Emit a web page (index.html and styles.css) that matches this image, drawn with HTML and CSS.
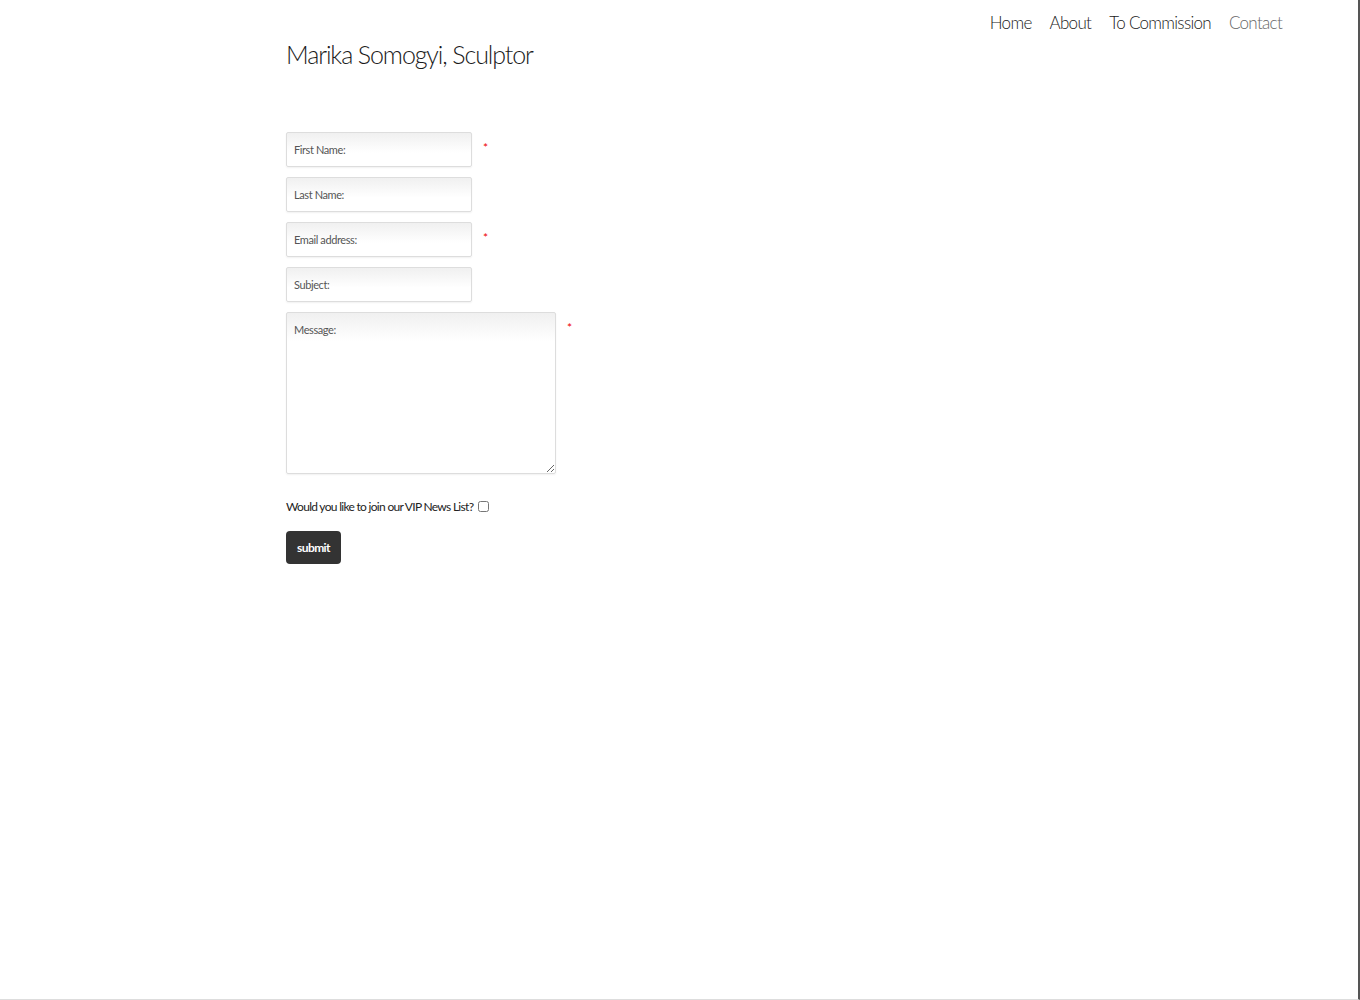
FILE: index.html
```html
<!DOCTYPE html>
<html>
  <head>
    <title>Contact - Marika Somogyi, Sculptor</title>
    <meta charset="UTF-8" />
    <link rel="stylesheet" href="styles.css">
  </head>
  <body>
    <div class="page">
      <div class="header">
        <ul class="nav">
          <li><a href="#">Home</a></li>
          <li><a href="#">About</a></li>
          <li><a href="#">To Commission</a></li>
          <li><a href="#" class="current">Contact</a></li>
        </ul>
        <h1 class="site-title">Marika Somogyi, Sculptor</h1>
      </div>

      <form class="contact-form">
        <div class="field">
          <input type="text" placeholder="First Name:" />
          <span class="required">*</span>
        </div>
        <div class="field">
          <input type="text" placeholder="Last Name:" />
        </div>
        <div class="field">
          <input type="text" placeholder="Email address:" />
          <span class="required">*</span>
        </div>
        <div class="field">
          <input type="text" placeholder="Subject:" />
        </div>
        <div class="field">
          <textarea placeholder="Message:"></textarea>
          <span class="required">*</span>
        </div>

        <label class="newsletter">
          Would you like to join our VIP News List?
          <input type="checkbox" />
        </label>

        <button type="submit" class="submit-btn">submit</button>
      </form>
    </div>
  </body>
</html>
```

FILE: styles.css
```css
html {
  height: 100%;
}
body {
  margin: 0;
  min-height: 100%;
  box-sizing: border-box;
  font-family: Lato, "Open Sans", sans-serif;
  color: #222;
  background: #fff;
  border-right: 2px solid #555;
  border-bottom: 1px solid #ddd;
}
.page {
  padding: 0 76px 0 286px;
}

.header {
  display: flex;
  flex-direction: column;
}
.nav {
  list-style: none;
  margin: 0;
  padding: 12px 0 0;
  display: flex;
  justify-content: flex-end;
  gap: 18px;
}
.nav a {
  font-size: 17px;
  font-weight: 300;
  letter-spacing: -0.7px;
  color: #1a1a1a;
  text-decoration: none;
}
.nav a.current {
  color: #666;
}
.site-title {
  margin: 6px 0 0;
  font-size: 25px;
  font-weight: 300;
  letter-spacing: -1.1px;
  color: #1a1a1a;
}

.contact-form {
  margin-top: 63px;
  display: flex;
  flex-direction: column;
  gap: 10px;
}
.field {
  display: flex;
  align-items: flex-start;
  gap: 11px;
}
.field input,
.field textarea {
  box-sizing: border-box;
  width: 186px;
  height: 35px;
  padding: 0 7px;
  border: 1px solid #ddd;
  border-radius: 2px;
  background: linear-gradient(#f0f0f0, #fff 60%);
  box-shadow: 0 1px 2px rgba(0, 0, 0, 0.06);
  font-family: inherit;
  font-size: 11px;
  letter-spacing: -0.4px;
  color: #333;
}
.field textarea {
  width: 270px;
  height: 162px;
  padding: 10px 7px;
  background: linear-gradient(#f0f0f0, #fff 18%);
}
.field input::placeholder,
.field textarea::placeholder {
  color: #555;
}
.required {
  color: #e00;
  font-size: 12px;
  margin-top: 8px;
}

.newsletter {
  margin-top: 15px;
  display: flex;
  align-items: center;
  gap: 3px;
  font-size: 12px;
  letter-spacing: -0.7px;
  color: #222;
}
.newsletter input {
  margin: 0 0 0 2px;
  width: 11px;
  height: 11px;
}

.submit-btn {
  align-self: flex-start;
  margin-top: 7px;
  width: 55px;
  height: 33px;
  border: none;
  border-radius: 4px;
  background: #333;
  color: #fff;
  font-family: inherit;
  font-size: 12px;
  font-weight: bold;
  letter-spacing: -0.6px;
}
```
